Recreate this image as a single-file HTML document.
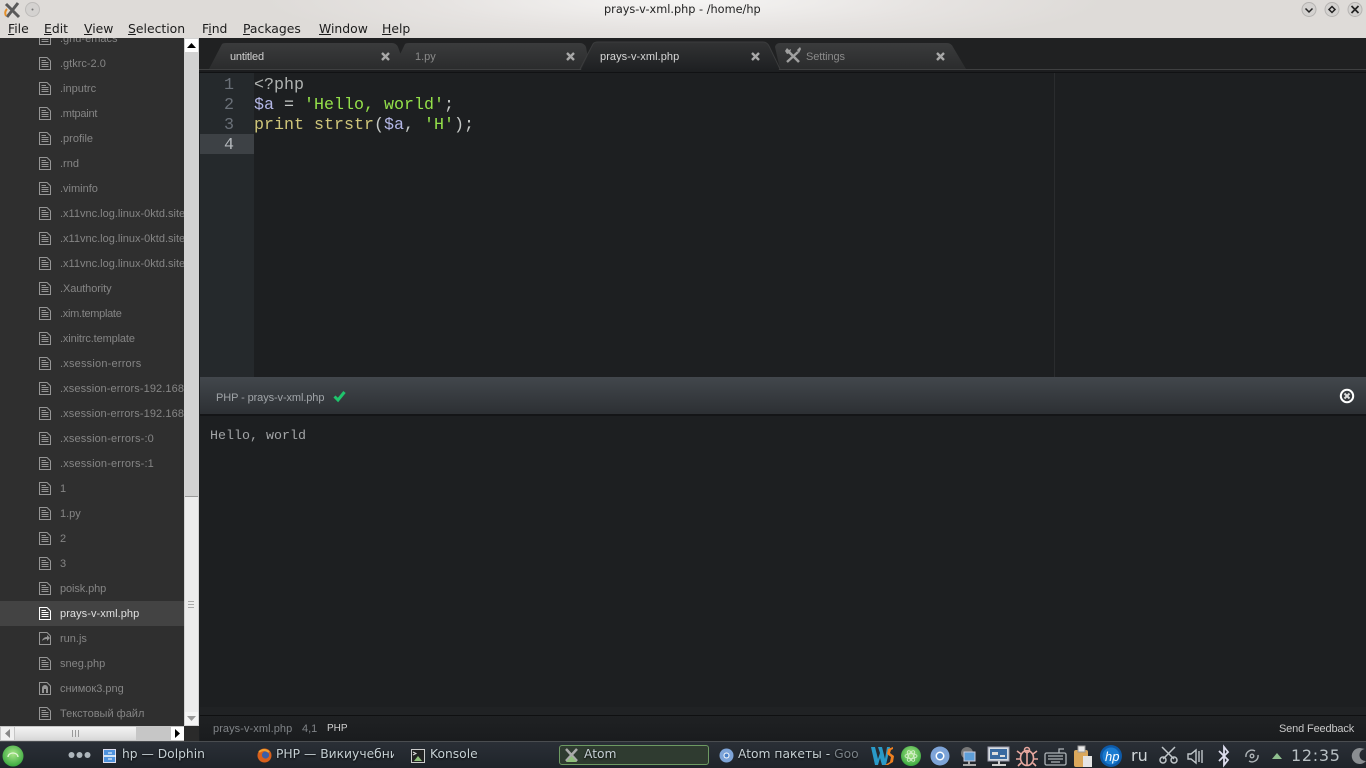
<!DOCTYPE html>
<html><head><meta charset="utf-8"><title>prays-v-xml.php</title>
<style>
html,body{margin:0;padding:0;width:1366px;height:768px;overflow:hidden;background:#1d1f21}
body{position:relative;font-family:"Liberation Sans","Noto Sans CJK SC",sans-serif}
.a{position:absolute;white-space:pre}
svg{position:absolute;overflow:visible}
#title{left:0;top:0;width:1366px;height:38px;background:radial-gradient(ellipse 420px 50px at 683px 0,#f6f5f4 0,#e6e3e1 60%,#dedbd8 100%)}
.menu{top:21px;font:12.4px/16px "DejaVu Sans",sans-serif;color:#1c1c1c}
.menu u{text-decoration:underline}
#side{left:0;top:38px;width:185px;height:688px;background:#2f2f2f;overflow:hidden}
.r{position:absolute;left:60px;font-size:11px;line-height:14px;color:#858585;white-space:pre;width:125px;overflow:hidden}
.code{font:16.67px/20px "Liberation Mono",monospace}
.ln{position:absolute;left:200px;width:34px;text-align:right;color:#6a7078;font:16.67px/20px "Liberation Mono",monospace}
.tab{font-size:11px;line-height:14px;top:50px;color:#8a8a8a}
.tb{top:746px;font:12.3px/17px "DejaVu Sans",sans-serif;color:#c6d0d4;text-shadow:0 1px 2px #000}
</style></head><body>
<svg width="0" height="0" style="position:absolute"><defs>
<g id="f" fill="none" stroke="currentColor" stroke-width="1"><path d="M.5.5H8L11.5 4V12.5H.5Z"/><path d="M2.5 3.5H7M2.5 5.5H9.5M2.5 7.5H9.5M2.5 9.5H9.5"/></g>
<g id="cx"><path d="M1 1L8 8M8 1L1 8" stroke="#a8a8a8" stroke-width="2.4" fill="none"/></g>
<linearGradient id="tg" x1="0" y1="0" x2="0" y2="1"><stop offset="0" stop-color="#3a3b3c"/><stop offset="1" stop-color="#2b2c2d"/></linearGradient>
<linearGradient id="ta" x1="0" y1="0" x2="0" y2="1"><stop offset="0" stop-color="#323334"/><stop offset="1" stop-color="#1d1f21"/></linearGradient>
<radialGradient id="gg" cx=".5" cy=".4" r=".6"><stop offset="0" stop-color="#a8e688"/><stop offset="1" stop-color="#3aa83f"/></radialGradient>
<linearGradient id="pn" x1="0" y1="0" x2="0" y2="1"><stop offset="0" stop-color="#42474c"/><stop offset="1" stop-color="#2c2f33"/></linearGradient>
</defs></svg>

<div class="a" id="title"></div>
<svg style="left:2px;top:1px" width="20" height="18"><path d="M4 3L17 16M16 2L5 16" stroke="#5a5a5a" stroke-width="3"/><path d="M4 15q-2-4 1-7" stroke="#e5902a" stroke-width="2" fill="none"/></svg>
<svg style="left:25px;top:2px" width="15" height="15"><circle cx="7.5" cy="7.5" r="7" fill="#d4d2d0" stroke="#bdbbb9"/><circle cx="7.5" cy="7.5" r="1" fill="#777"/></svg>
<div class="a" style="left:604px;top:3px;font:11.3px/14px 'DejaVu Sans',sans-serif;color:#222">prays-v-xml.php - /home/hp</div>
<svg style="left:1301px;top:2px" width="62" height="16">
<g fill="#d4d2d0" stroke="#b5b3b1"><circle cx="8" cy="7.5" r="7"/><circle cx="31" cy="7.5" r="7"/><circle cx="54" cy="7.5" r="7"/></g>
<path d="M4.5 6.5L8 10L11.5 6.5" fill="none" stroke="#222" stroke-width="1.5"/>
<path d="M31 4.5L34 7.5L31 10.5L28 7.5Z" fill="none" stroke="#222" stroke-width="1.5"/>
<path d="M50.5 4L57.5 11M57.5 4L50.5 11" stroke="#222" stroke-width="1.7"/></svg>
<div class="a menu" style="left:8px"><u>F</u>ile</div>
<div class="a menu" style="left:44px"><u>E</u>dit</div>
<div class="a menu" style="left:84px"><u>V</u>iew</div>
<div class="a menu" style="left:128px"><u>S</u>election</div>
<div class="a menu" style="left:202px">F<u>i</u>nd</div>
<div class="a menu" style="left:243px"><u>P</u>ackages</div>
<div class="a menu" style="left:319px"><u>W</u>indow</div>
<div class="a menu" style="left:382px"><u>H</u>elp</div>

<!-- sidebar -->
<div class="a" id="side"></div>
<div class="a" style="left:0;top:601px;width:185px;height:25px;background:#434343"></div>
<div class="a" style="left:0;top:38px;width:185px;height:688px;overflow:hidden">
<svg style="left:39px;top:-6px;color:#969696" width="12" height="700">
<use href="#f" y="0"/><use href="#f" y="25"/><use href="#f" y="50"/><use href="#f" y="75"/><use href="#f" y="100"/><use href="#f" y="125"/><use href="#f" y="150"/><use href="#f" y="175"/><use href="#f" y="200"/><use href="#f" y="225"/><use href="#f" y="250"/><use href="#f" y="275"/><use href="#f" y="300"/><use href="#f" y="325"/><use href="#f" y="350"/><use href="#f" y="375"/><use href="#f" y="400"/><use href="#f" y="425"/><use href="#f" y="450"/><use href="#f" y="475"/><use href="#f" y="500"/><use href="#f" y="525"/><use href="#f" y="550"/>
<use href="#f" y="575" style="color:#fff"/>
<use href="#f" y="625"/><use href="#f" y="675"/>
<g fill="none" stroke="#969696"><path d="M.5 600.5H8L11.5 604V612.5H.5Z"/><path d="M.5 650.5H8L11.5 654V662.5H.5Z"/></g>
<path d="M3 609q1-4 5-4V603l3 3-3 3V607q-3 0-5 2Z" fill="#969696"/>
<path d="M3 661V656a3 3 0 0 1 6 0V661H7V657H5V661Z" fill="#969696"/>
</svg>
<div class="r" style="top:-6px">.gnu-emacs</div>
<div class="r" style="top:19px">.gtkrc-2.0</div>
<div class="r" style="top:44px">.inputrc</div>
<div class="r" style="top:69px;letter-spacing:-.25px">.mtpaint</div>
<div class="r" style="top:94px">.profile</div>
<div class="r" style="top:119px">.rnd</div>
<div class="r" style="top:144px">.viminfo</div>
<div class="r" style="top:169px">.x11vnc.log.linux-0ktd.site</div>
<div class="r" style="top:194px">.x11vnc.log.linux-0ktd.site</div>
<div class="r" style="top:219px">.x11vnc.log.linux-0ktd.site</div>
<div class="r" style="top:244px;letter-spacing:-.1px">.Xauthority</div>
<div class="r" style="top:269px;letter-spacing:-.3px">.xim.template</div>
<div class="r" style="top:294px;letter-spacing:-.13px">.xinitrc.template</div>
<div class="r" style="top:319px;letter-spacing:.2px">.xsession-errors</div>
<div class="r" style="top:344px;letter-spacing:.1px">.xsession-errors-192.168</div>
<div class="r" style="top:369px;letter-spacing:.1px">.xsession-errors-192.168</div>
<div class="r" style="top:394px;letter-spacing:.15px">.xsession-errors-:0</div>
<div class="r" style="top:419px;letter-spacing:.15px">.xsession-errors-:1</div>
<div class="r" style="top:444px">1</div>
<div class="r" style="top:469px">1.py</div>
<div class="r" style="top:494px">2</div>
<div class="r" style="top:519px">3</div>
<div class="r" style="top:544px;letter-spacing:-.1px">poisk.php</div>
<div class="r" style="top:569px;color:#e0e0e0;letter-spacing:.07px">prays-v-xml.php</div>
<div class="r" style="top:594px">run.js</div>
<div class="r" style="top:619px">sneg.php</div>
<div class="r" style="top:644px">снимок3.png</div>
<div class="r" style="top:669px">Текстовый файл</div>
</div>
<!-- scrollbars -->
<div class="a" style="left:184px;top:38px;width:15px;height:703px;background:#d2d2d2"></div>
<div class="a" style="left:185px;top:39px;width:13px;height:13px;background:#fff"></div>
<svg style="left:187px;top:42px" width="10" height="7"><path d="M0 6H9L4.5 1Z" fill="#000"/></svg>
<div class="a" style="left:185px;top:496px;width:13px;height:215px;background:#ececec;border-top:1px solid #999"></div>
<svg style="left:188px;top:601px" width="8" height="8"><path d="M0 .5H6M0 3.5H6M0 6.5H6" stroke="#aaa"/></svg>
<div class="a" style="left:185px;top:712px;width:13px;height:13px;background:#f4f4f4"></div>
<svg style="left:187px;top:716px" width="10" height="7"><path d="M0 0H9L4.5 5Z" fill="#999"/></svg>
<div class="a" style="left:0;top:726px;width:184px;height:15px;background:#c6c6c6"></div>
<div class="a" style="left:1px;top:727px;width:13px;height:13px;background:#f0f0f0"></div>
<svg style="left:5px;top:729px" width="6" height="9"><path d="M5 0V9L0 4.5Z" fill="#888"/></svg>
<div class="a" style="left:15px;top:727px;width:121px;height:13px;background:linear-gradient(#f4f4f4,#d8d8d8)"></div>
<svg style="left:72px;top:730px" width="8" height="7"><path d="M.5 0V7M3.5 0V7M6.5 0V7" stroke="#999"/></svg>
<div class="a" style="left:171px;top:727px;width:13px;height:13px;background:#fff"></div>
<svg style="left:175px;top:729px" width="6" height="9"><path d="M0 0V9L5 4.5Z" fill="#000"/></svg>
<div class="a" style="left:184px;top:726px;width:15px;height:15px;background:#2a2a2a"></div>

<!-- tab bar -->
<div class="a" style="left:199px;top:38px;width:1167px;height:35px;background:#202122"></div>
<div class="a" style="left:199px;top:69px;width:1167px;height:1px;background:#3f4041"></div>
<div class="a" style="left:199px;top:70px;width:1167px;height:3px;background:#1c1d1f"></div>
<svg style="left:199px;top:38px" width="780" height="35">
<path d="M10 31L23 6Q24 5 27 5H193Q197 5 199 9L207 31Z" fill="url(#tg)"/>
<path d="M194 31L206 6Q207 5 210 5H381Q385 5 387 9L391 31Z" fill="url(#tg)"/>
<path d="M581 31L576 9Q577 5 581 5H748Q752 5 754 9L767 31Z" fill="url(#tg)"/>
<path d="M381 34L394 6Q395 4 399 4H564Q568 4 570 8L581 34Z" fill="url(#ta)"/>
<path d="M381 31L394 6Q395 4 399 4H564Q568 4 570 8L581 31" fill="none" stroke="#3b3c3d"/>
</svg>
<div class="a" style="left:199px;top:72px;width:1167px;height:1px;background:#111214"></div>
<div class="a tab" style="left:230px;color:#cfcfcf;letter-spacing:-.2px">untitled</div>
<div class="a tab" style="left:415px">1.py</div>
<div class="a tab" style="left:600px;color:#d8d8d8;letter-spacing:.07px">prays-v-xml.php</div>
<div class="a tab" style="left:806px;letter-spacing:-.1px">Settings</div>
<svg style="left:381px;top:52px" width="9" height="9"><use href="#cx"/></svg>
<svg style="left:566px;top:52px" width="9" height="9"><use href="#cx"/></svg>
<svg style="left:751px;top:52px" width="9" height="9"><use href="#cx"/></svg>
<svg style="left:936px;top:52px" width="9" height="9"><use href="#cx"/></svg>
<svg style="left:784px;top:47px" width="18" height="17"><path d="M4 4L15 15" stroke="#a0a0a0" stroke-width="2.6"/><path d="M14 5L3 15" stroke="#a0a0a0" stroke-width="2.4"/><path d="M1 4L3 1L5 3L7 2L6 6L3 7Z" fill="#a0a0a0"/><path d="M13 3L16 0L17 2L15 6Z" fill="#a0a0a0"/></svg>

<!-- editor -->
<div class="a" style="left:199px;top:73px;width:1167px;height:305px;background:#1d1f21"></div>
<div class="a" style="left:200px;top:73px;width:54px;height:305px;background:#25292c"></div>
<div class="a" style="left:200px;top:134px;width:54px;height:20px;background:#3d4145"></div>
<div class="a" style="left:1054px;top:73px;width:1px;height:305px;background:#2a2c2e"></div>
<div class="ln" style="top:76px">1</div>
<div class="ln" style="top:96px">2</div>
<div class="ln" style="top:116px">3</div>
<div class="ln" style="top:136px;color:#b4b8bc">4</div>
<div class="a code" style="left:254px;top:76px;color:#b0b3b1">&lt;?php</div>
<div class="a code" style="left:254px;top:96px;color:#c5c8c6"><span style="color:#b4b7e6">$a</span> = <span style="color:#94e04a">'Hello, world'</span>;</div>
<div class="a code" style="left:254px;top:116px;color:#c5c8c6"><span style="color:#cfc67a">print strstr</span>(<span style="color:#b4b7e6">$a</span>, <span style="color:#94e04a">'H'</span>);</div>

<!-- run panel -->
<svg style="left:200px;top:377px" width="1166" height="38"><rect width="1166" height="38" fill="url(#pn)"/></svg>
<div class="a" style="left:200px;top:414px;width:1166px;height:2px;background:#141517"></div>
<div class="a" style="left:216px;top:391px;font-size:11px;line-height:14px;color:#a0a4a8;letter-spacing:-.1px">PHP - prays-v-xml.php</div>
<svg style="left:333px;top:390px" width="13" height="12"><path d="M1.5 6.5L5 10L11.5 2" fill="none" stroke="#1fc46c" stroke-width="3"/></svg>
<svg style="left:1339px;top:388px" width="16" height="16"><circle cx="8" cy="8" r="6.2" fill="none" stroke="#fff" stroke-width="2"/><path d="M5.5 5.5L10.5 10.5M10.5 5.5L5.5 10.5" stroke="#ddd" stroke-width="2"/></svg>
<div class="a" style="left:200px;top:416px;width:1166px;height:299px;background:#1d1f21"></div>
<div class="a" style="left:200px;top:707px;width:1166px;height:8px;background:#202224"></div>
<div class="a" style="left:210px;top:429px;font:13.33px/16px 'Liberation Mono',monospace;color:#a2a4a6">Hello, world</div>

<!-- status bar -->
<div class="a" style="left:200px;top:715px;width:1166px;height:1px;background:#0f1011"></div>
<div class="a" style="left:200px;top:716px;width:1166px;height:25px;background:linear-gradient(#1f2123,#1a1c1e)"></div>
<div class="a" style="left:213px;top:722px;font-size:11px;line-height:14px;color:#7f8387;letter-spacing:.07px">prays-v-xml.php</div>
<div class="a" style="left:302px;top:722px;font-size:11px;line-height:14px;color:#7f8387">4,1</div>
<div class="a" style="left:327px;top:722px;font-size:10px;line-height:14px;color:#d0d0d0">PHP</div>
<div class="a" style="left:1279px;top:722px;font-size:11px;line-height:14px;color:#c8c8c8;letter-spacing:-.15px">Send Feedback</div>

<!-- taskbar -->
<div class="a" style="left:0;top:741px;width:1366px;height:27px;background:linear-gradient(#2a2f36,#1f242a);border-top:1px solid #4a4d50;box-sizing:border-box"></div>
<svg style="left:2px;top:745px" width="22" height="22"><circle cx="11" cy="11" r="10.5" fill="url(#gg)"/><path d="M6 12a5 4 0 0 1 10 0" fill="none" stroke="#e2f6d6" stroke-width="1.3"/></svg>
<svg style="left:68px;top:751px" width="24" height="8"><circle cx="3.5" cy="4" r="3" fill="#aeb6bc"/><circle cx="11.5" cy="4" r="3" fill="#aeb6bc"/><circle cx="19.5" cy="4" r="3" fill="#aeb6bc"/></svg>
<svg style="left:103px;top:749px" width="14" height="14"><rect x=".5" y=".5" width="12" height="13" fill="#4f93de" stroke="#dde"/><path d="M1 7H13" stroke="#fff" stroke-width="1.5"/><path d="M5 4H9M5 10H9" stroke="#fff"/></svg>
<div class="a tb" style="left:122px">hp — Dolphin</div>
<svg style="left:257px;top:748px" width="15" height="15"><circle cx="7.5" cy="7.5" r="7" fill="#d8601c"/><circle cx="8.5" cy="7" r="3.6" fill="#3a5fa8"/><path d="M2 4q5-4 10 0" stroke="#f0a030" stroke-width="2" fill="none"/></svg>
<div class="a tb" style="left:276px;width:118px;overflow:hidden">PHP — Викиучебник</div>
<svg style="left:411px;top:749px" width="14" height="14"><rect x=".5" y=".5" width="13" height="13" fill="#222" stroke="#ccc"/><path d="M3 12L7 7L11 12Z" fill="#8fbf7a"/><path d="M2 3L5 4.5L2 6" stroke="#ddd" fill="none"/></svg>
<div class="a tb" style="left:430px">Konsole</div>
<div class="a" style="left:559px;top:745px;width:150px;height:20px;box-sizing:border-box;border:1px solid #6d9a62;border-radius:3px;background:#2f3b30"></div>
<svg style="left:564px;top:747px" width="15" height="16"><path d="M2 2L13 14M13 2L2 14" stroke="#aaa" stroke-width="2.5"/><path d="M2 15L7.5 9L13 15Z" fill="#8fbf7a"/></svg>
<div class="a tb" style="left:584px">Atom</div>
<svg style="left:719px;top:748px" width="15" height="15"><circle cx="7.5" cy="7.5" r="7" fill="#7ea4d8"/><circle cx="7.5" cy="7.5" r="3" fill="#fff"/><circle cx="7.5" cy="7.5" r="2" fill="#4a80c8"/></svg>
<div class="a tb" style="left:738px;width:120px;overflow:hidden">Atom пакеты - <span style="color:#7a8288">Goo</span></div>

<svg style="left:870px;top:745px" width="496" height="23">
<path d="M1 2H5L8 14L10 8L8 2H12L15 14L17 2H20L16 20H12L10 13L8 20H5Z" fill="#2a9ac8"/><path d="M23 2L18 4L17 9L21 12L20 17L15 20H18L23 17L24 11L20 8L21 5L23 4Z" fill="#f08020"/>
<circle cx="41" cy="11" r="10" fill="url(#gg)"/><g fill="none" stroke="#d8f0d0" stroke-width=".8"><ellipse cx="41" cy="11" rx="6" ry="2.5" transform="rotate(60 41 11)"/><ellipse cx="41" cy="11" rx="6" ry="2.5" transform="rotate(-60 41 11)"/><ellipse cx="41" cy="11" rx="6" ry="2.5"/></g>
<circle cx="70" cy="11" r="9.5" fill="#7ea4d8"/><circle cx="70" cy="11" r="4.5" fill="#fff"/><circle cx="70" cy="11" r="3" fill="#5a8fd0"/>
<circle cx="97" cy="8" r="6" fill="#777"/><rect x="94" y="7" width="11" height="9" fill="#5e9ed8" stroke="#ccd"/><path d="M93 20H106M99 16V20" stroke="#aaa" stroke-width="2"/>
<rect x="118" y="2" width="21" height="14" fill="#d8dee4" stroke="#99a"/><rect x="120" y="4" width="17" height="10" fill="#3a6aa0"/><rect x="122" y="7" width="6" height="3" fill="#ddd"/><rect x="130" y="10" width="5" height="2" fill="#ddd"/><path d="M122 20H136M129 16V20" stroke="#ccc" stroke-width="2"/>
<g fill="none" stroke="#e8a8a0" stroke-width="1.6"><ellipse cx="157" cy="13" rx="6.5" ry="7.5"/><circle cx="157" cy="5" r="2.5"/><path d="M157 6V20M151 9L147 6M163 9L167 6M150 14H146M164 14H168M151 18L148 21M163 18L166 21"/></g>
<g fill="none" stroke="#aeb4b8" stroke-width="1.3"><rect x="175" y="8" width="21" height="12" rx="1.5"/><path d="M178 11H193M178 14H193M181 17H190M189 8V4H194"/></g>
<rect x="204" y="5" width="14" height="17" rx="2" fill="#dba85c"/><rect x="208" y="1" width="7" height="6" fill="#e8e8e8" stroke="#999"/><rect x="213" y="11" width="9" height="11" fill="#e5e5e5"/>
<circle cx="241" cy="11" r="11" fill="#0e5aa8"/><circle cx="241" cy="11" r="8.5" fill="#1a7bd0"/>
<text x="235" y="16" font-family="Liberation Sans" font-size="13" font-style="italic" fill="#fff">hp</text>
<text x="261" y="16" font-family="DejaVu Sans" font-size="16" fill="#cfd5d8">ru</text>
<g fill="none" stroke="#c0c6ca" stroke-width="1.5"><path d="M292 2L304 14M305 2L293 14"/><circle cx="293" cy="15" r="3"/><circle cx="304" cy="15" r="3"/></g>
<path d="M318 9H321L326 5V18L321 14H318Z" fill="none" stroke="#c0c6ca" stroke-width="1.4"/><path d="M329 6V17M332 5V18" stroke="#c0c6ca" stroke-width="1.4"/>
<path d="M349 6L358 15L354 20V2L358 7L349 16" fill="none" stroke="#dde" stroke-width="1.8"/>
<g fill="none" stroke="#aeb4b8" stroke-width="1.4"><circle cx="382" cy="11" r="1.8"/><path d="M376 12a6 6 0 0 1 9-6M388 10a6 6 0 0 1-9 6"/></g>
<path d="M402 14L407 8L412 14Z" fill="#8fbf8f"/>
<text x="421" y="16" font-family="DejaVu Sans" font-size="16" letter-spacing=".7" fill="#b8c0c4">12:35</text>
<path d="M490 3a8 8 0 1 0 6 13a6 6 0 0 1-1-12Z" fill="#8a8e92"/>
</svg>
</body></html>
